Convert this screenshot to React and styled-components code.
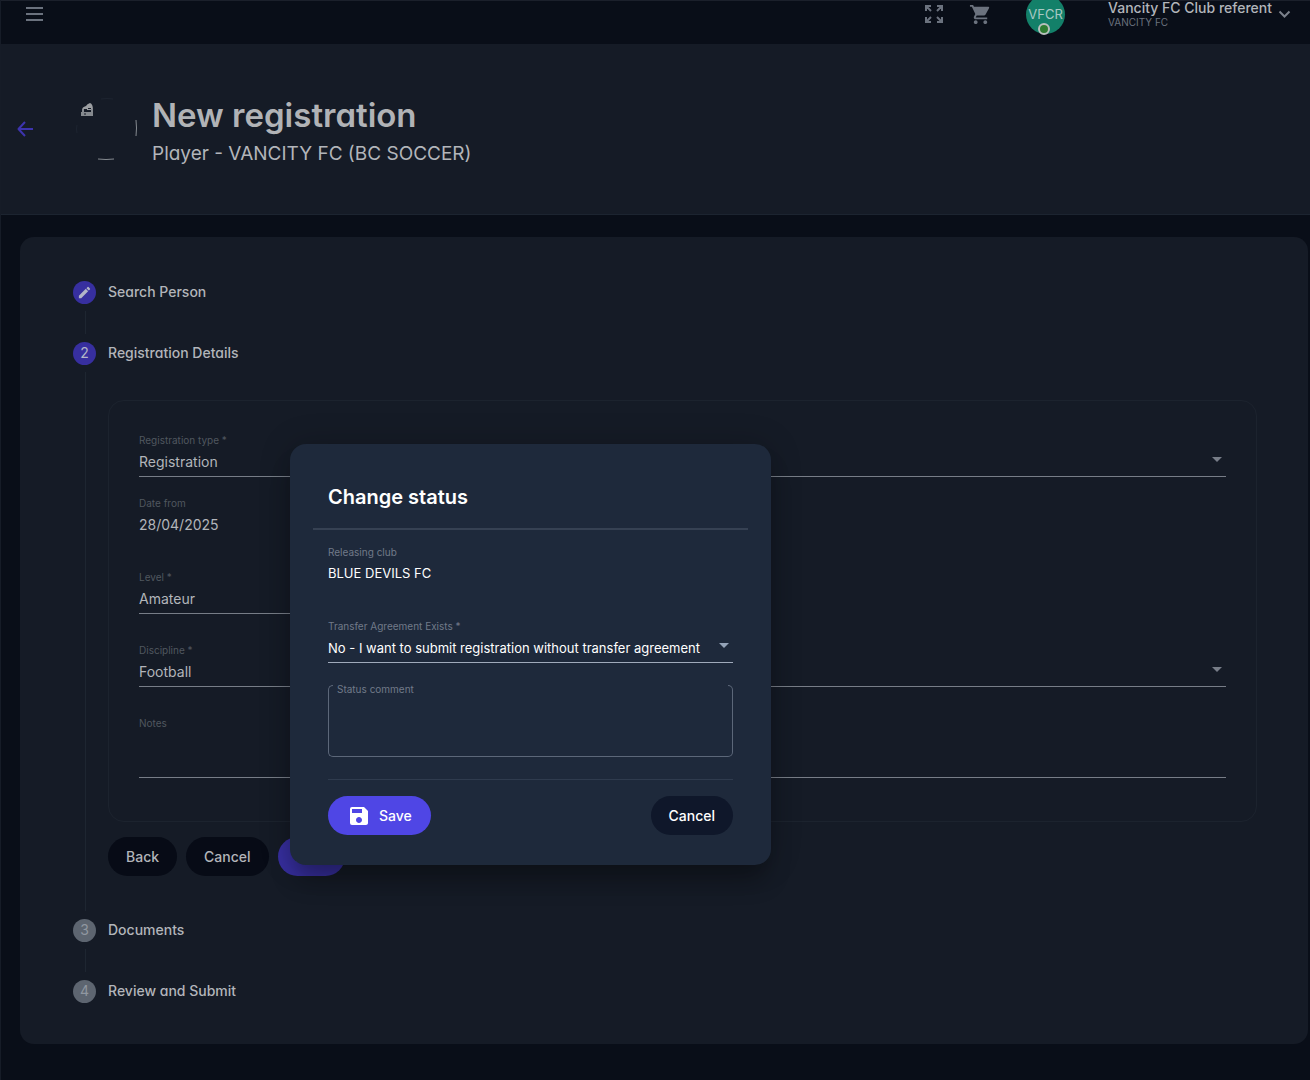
import React from 'react';
import styled, { createGlobalStyle } from 'styled-components';
import { MdShoppingCart, MdEdit, MdSave } from 'react-icons/md';

const GlobalStyle = createGlobalStyle`
  *, *::before, *::after { box-sizing: border-box; }
  body {
    margin: 0;
    background: #090e18;
    color: #b2b5ba;
    font: 400 14px/20px Inter, "Liberation Sans", sans-serif;
  }
  button, input, select, textarea { font: inherit; color: inherit; }
  h1, h2, h3, p { margin: 0; font-weight: inherit; }
`;

const Page = styled.div`
  position: relative;
  min-height: 100vh;
  padding-bottom: 36px;
  overflow: hidden;
  border-left: 1px solid #161c27;
`;

const TopBar = styled.header`
  display: flex;
  align-items: center;
  height: 44px;
  padding: 0 19px 17px 24px;
  border-top: 1px solid #1b202b;
`;

const IconButton = styled.button`
  display: grid;
  place-items: center;
  flex: none;
  padding: 0;
  border: 0;
  background: none;
  color: ${(p) => p.$color || '#6b727e'};
  cursor: pointer;
`;

const Tools = styled.div`
  display: flex;
  align-items: center;
  gap: 25px;
  margin-left: auto;
  margin-right: 34px;
`;

const Avatar = styled.div`
  position: relative;
  display: grid;
  place-items: center;
  flex: none;
  width: 39px;
  height: 39px;
  margin-right: 43px;
  border-radius: 50%;
  background: #138069;
  color: #a9c9c4;
  font-size: 13px;

  &::after {
    content: '';
    position: absolute;
    left: 12px;
    bottom: -1px;
    width: 12px;
    height: 12px;
    border: 2px solid #b9c0bd;
    border-radius: 50%;
    background: #2f7d32;
  }
`;

const UserMenu = styled.button`
  display: flex;
  align-items: center;
  gap: 6px;
  padding: 0;
  border: 0;
  background: none;
  text-align: left;
  cursor: pointer;
`;

const UserText = styled.span`
  display: grid;
  font-weight: 500;
  line-height: 16px;
`;

const UserClub = styled.span`
  color: #6b727e;
  font-size: 10px;
  font-weight: 400;
  line-height: 12px;
`;

const PageHeader = styled.section`
  display: flex;
  align-items: center;
  height: 171px;
  padding: 0 16px;
  border-bottom: 1px solid #1c2430;
  background: #151b26;
`;

const ClubLogo = styled.svg`
  flex: none;
  width: 64px;
  height: 64px;
  margin: 0 13px 0 41px;
`;

const Heading = styled.div`
  padding-top: 6px;
  font-feature-settings: 'cv11';
`;

const Title = styled.h1`
  color: #b1b3b6;
  font-size: 33px;
  font-weight: 600;
  line-height: 44px;
`;

const Subtitle = styled.p`
  font-size: 19px;
  line-height: 34px;
`;

const Card = styled.main`
  margin: 22px 2px 0 19px;
  padding: 36px 51px 34px 53px;
  border-radius: 14px;
  background: #151b26;
`;

const StepHeader = styled.div`
  display: flex;
  align-items: center;
  gap: 12px;
  height: 38px;
  font-feature-settings: 'cv11';
`;

const StepBadge = styled.span`
  display: grid;
  place-items: center;
  flex: none;
  width: 23px;
  height: 23px;
  border-radius: 50%;
  background: ${(p) => (p.$active ? '#372f9f' : '#5d6570')};
  color: ${(p) => (p.$active ? '#b2b5c8' : '#9097a0')};
`;

const StepLabel = styled.h2`
  font-size: 14px;
  font-weight: 500;
`;

const StepBody = styled.div`
  min-height: 23px;
  margin-left: 12px;
  padding: ${(p) => (p.$open ? '28px 0 35px 22px' : '0')};
  border-left: 1px solid #1e2631;
`;

const Panel = styled.form`
  display: grid;
  grid-template-columns: repeat(2, minmax(0, 1fr));
  row-gap: 28px;
  padding: 31px 30px 43px;
  border: 1px solid #1c232e;
  border-radius: 16px;
`;

const Field = styled.div`
  display: flex;
  flex-direction: column;
  grid-column: ${(p) => (p.$half ? '1' : '1 / -1')};
  margin-top: ${(p) => (p.$tight ? '-10px' : '0')};
`;

const FieldLabel = styled.label`
  color: ${(p) => (p.$bright ? '#717a89' : '#50575f')};
  font-size: 10px;
  line-height: 16px;
`;

const Control = styled.input`
  width: 100%;
  height: 29px;
  padding: 0;
  border: 0;
  border-bottom: 1px solid #777d87;
  border-radius: 0;
  outline: 0;
  background: none;
`;

const PlainControl = styled(Control)`
  height: 30px;
  padding-bottom: 3px;
  border-bottom-color: transparent;
`;

const NotesArea = styled(Control)`
  height: 47px;
  resize: none;
`;

const SelectBox = styled.div`
  position: relative;

  &::after {
    content: '';
    position: absolute;
    top: 9px;
    right: 4px;
    border: 5px solid transparent;
    border-bottom-width: 0;
    border-top-color: ${(p) => (p.$bright ? '#94a3b8' : '#777d87')};
    pointer-events: none;
  }
`;

const SelectControl = styled(Control)`
  display: block;
  padding-right: 16px;
  border-bottom-color: ${(p) => (p.$bright ? '#a0aabb' : '#777d87')};
  appearance: none;
`;

const StepActions = styled.div`
  display: flex;
  gap: 9px;
  padding-top: 15px;
`;

const buttonTones = {
  dark: { background: '#070b16', color: '#b2b5ba' },
  dimmed: { background: '#372f9f', color: '#b2b5c8' },
  primary: { background: '#4f46e5', color: '#ffffff' },
  night: { background: '#0f172a', color: '#ffffff' },
};

const Button = styled.button`
  display: inline-flex;
  align-items: center;
  gap: 8px;
  height: 39px;
  padding: 0 ${(p) => (p.$tone === 'primary' ? '19px' : '18px')};
  border: 0;
  border-radius: 20px;
  background: ${(p) => buttonTones[p.$tone].background};
  color: ${(p) => buttonTones[p.$tone].color};
  font-weight: 500;
  cursor: pointer;
`;

const Dialog = styled.section`
  position: absolute;
  top: 444px;
  left: 289px;
  width: 481px;
  padding: 37px 38px 30px;
  border-radius: 16px;
  background: #1e293b;
  color: #ffffff;
  box-shadow: 0 20px 25px -5px rgba(0, 0, 0, 0.3), 0 0 32px rgba(0, 0, 0, 0.2);
`;

const DialogTitle = styled.h2`
  margin: 0 -15px;
  padding: 0 15px 15px;
  border-bottom: 2px solid #364153;
  font-size: 20px;
  font-weight: 600;
  line-height: 32px;
`;

const DialogFields = styled.div`
  display: grid;
  row-gap: 28px;
  padding-top: 14px;
  font-size: 13px;
`;

const CommentBox = styled.div`
  display: grid;
  grid-template-columns: 5px 1fr 5px;
  height: 72px;
  margin: 22px 0;
`;

const Outline = styled.span`
  grid-row: 1;
  grid-column: ${(p) => ({ start: 1, middle: 2, end: 3 })[p.$part]};
  border: 0 solid #5c6779;
  border-bottom-width: 1px;
  ${(p) => p.$part === 'start' && 'border-top-width: 1px; border-left-width: 1px; border-radius: 5px 0 0 5px;'}
  ${(p) => p.$part === 'end' && 'border-top-width: 1px; border-right-width: 1px; border-radius: 0 5px 5px 0;'}
`;

const CommentField = styled.div`
  display: flex;
  flex-direction: column;
  grid-row: 1;
  grid-column: 2;
  margin: -4px 4px 4px;
`;

const CommentArea = styled.textarea`
  flex: 1;
  min-height: 0;
  padding: 4px 0;
  border: 0;
  outline: 0;
  background: none;
  resize: none;
`;

const DialogActions = styled.div`
  display: flex;
  justify-content: space-between;
  padding-top: 16px;
  border-top: 1px solid #2f3b4e;
`;

function SelectField({ id, label, value, bright, half }) {
  return (
    <Field $half={half}>
      <FieldLabel htmlFor={id} $bright={bright}>{label}</FieldLabel>
      <SelectBox $bright={bright}>
        <SelectControl as="select" id={id} $bright={bright} defaultValue={value}>
          <option>{value}</option>
        </SelectControl>
      </SelectBox>
    </Field>
  );
}

function Step({ marker, label, active, children, last, open }) {
  return (
    <>
      <StepHeader>
        <StepBadge $active={active}>{marker}</StepBadge>
        <StepLabel>{label}</StepLabel>
      </StepHeader>
      {!last && <StepBody $open={open}>{children}</StepBody>}
    </>
  );
}

export default function App() {
  return (
    <Page>
      <GlobalStyle />
      <TopBar>
        <IconButton aria-label="Menu">
          <svg width="19" height="16" viewBox="0 0 19 16" stroke="currentColor" strokeWidth="2">
            <path d="M1 2h17M1 8h17M1 14h17" />
          </svg>
        </IconButton>
        <Tools>
          <IconButton aria-label="Full screen">
            <svg width="20" height="20" viewBox="0 0 20 20" fill="none" stroke="currentColor" strokeWidth="2">
              <path d="M2 7V2h5M2 2l5 5M13 2h5v5M18 2l-5 5M2 13v5h5M2 18l5-5M18 13v5h-5M18 18l-5-5" />
            </svg>
          </IconButton>
          <IconButton aria-label="Shopping cart"><MdShoppingCart size={23} /></IconButton>
        </Tools>
        <Avatar>VFCR</Avatar>
        <UserMenu>
          <UserText>
            Vancity FC Club referent
            <UserClub>VANCITY FC</UserClub>
          </UserText>
          <svg width="13" height="9" viewBox="0 0 13 9" fill="none" stroke="#7b818b" strokeWidth="2">
            <path d="M1.5 1.5l5 5 5-5" />
          </svg>
        </UserMenu>
      </TopBar>

      <PageHeader>
        <IconButton aria-label="Back to previous page" $color="#3d34ae">
          <svg width="17" height="16" viewBox="0 0 17 16" fill="none" stroke="currentColor" strokeWidth="2" strokeLinejoin="round">
            <path d="M8 1L1.5 8 8 15M1.5 8H16" />
          </svg>
        </IconButton>
        <ClubLogo viewBox="0 0 64 64" fill="none" aria-hidden="true">
          <path d="M7 13q0-3 4-4 1-2 4-3 3 1 3 7z" fill="#9c9fa2" />
          <path d="M6 15h12v4H6z" fill="#85898e" />
          <path d="M7 12h2v4H7zM16 12h2v4h-2z" fill="#85898e" />
          <path d="M9 12.500h3M13 11.500h3M9 17h2" stroke="#151b26" />
          <path d="M61 23q1 8 0 16M23 62q8 1 16 0" stroke="#858a90" />
          <path d="M26 2q6-1 12 0M2 28q-1 4 0 8" stroke="#1d2430" />
        </ClubLogo>
        <Heading>
          <Title>New registration</Title>
          <Subtitle>Player - VANCITY FC (BC SOCCER)</Subtitle>
        </Heading>
      </PageHeader>

      <Card>
        <Step marker={<MdEdit size={15} />} label="Search Person" active />
        <Step marker="2" label="Registration Details" active open>
          <Panel>
            <SelectField id="type" label="Registration type *" value="Registration" />
            <Field $tight>
              <FieldLabel htmlFor="date">Date from</FieldLabel>
              <PlainControl id="date" defaultValue="28/04/2025" />
            </Field>
            <SelectField id="level" label="Level *" value="Amateur" half />
            <SelectField id="discipline" label="Discipline *" value="Football" />
            <Field>
              <FieldLabel htmlFor="notes">Notes</FieldLabel>
              <NotesArea as="textarea" id="notes" />
            </Field>
          </Panel>
          <StepActions>
            <Button $tone="dark">Back</Button>
            <Button $tone="dark">Cancel</Button>
            <Button $tone="dimmed">Next</Button>
          </StepActions>
        </Step>
        <Step marker="3" label="Documents" />
        <Step marker="4" label="Review and Submit" last />
      </Card>

      <Dialog role="dialog" aria-labelledby="dialog-title">
        <DialogTitle id="dialog-title">Change status</DialogTitle>
        <DialogFields>
          <Field>
            <FieldLabel htmlFor="club" $bright>Releasing club</FieldLabel>
            <PlainControl id="club" defaultValue="BLUE DEVILS FC" />
          </Field>
          <SelectField
            id="agreement"
            label="Transfer Agreement Exists *"
            value="No - I want to submit registration without transfer agreement"
            bright
          />
        </DialogFields>
        <CommentBox>
          <Outline $part="start" />
          <Outline $part="middle" />
          <Outline $part="end" />
          <CommentField>
            <FieldLabel htmlFor="comment" $bright>Status comment</FieldLabel>
            <CommentArea id="comment" />
          </CommentField>
        </CommentBox>
        <DialogActions>
          <Button $tone="primary"><MdSave size={24} />Save</Button>
          <Button $tone="night">Cancel</Button>
        </DialogActions>
      </Dialog>
    </Page>
  );
}
